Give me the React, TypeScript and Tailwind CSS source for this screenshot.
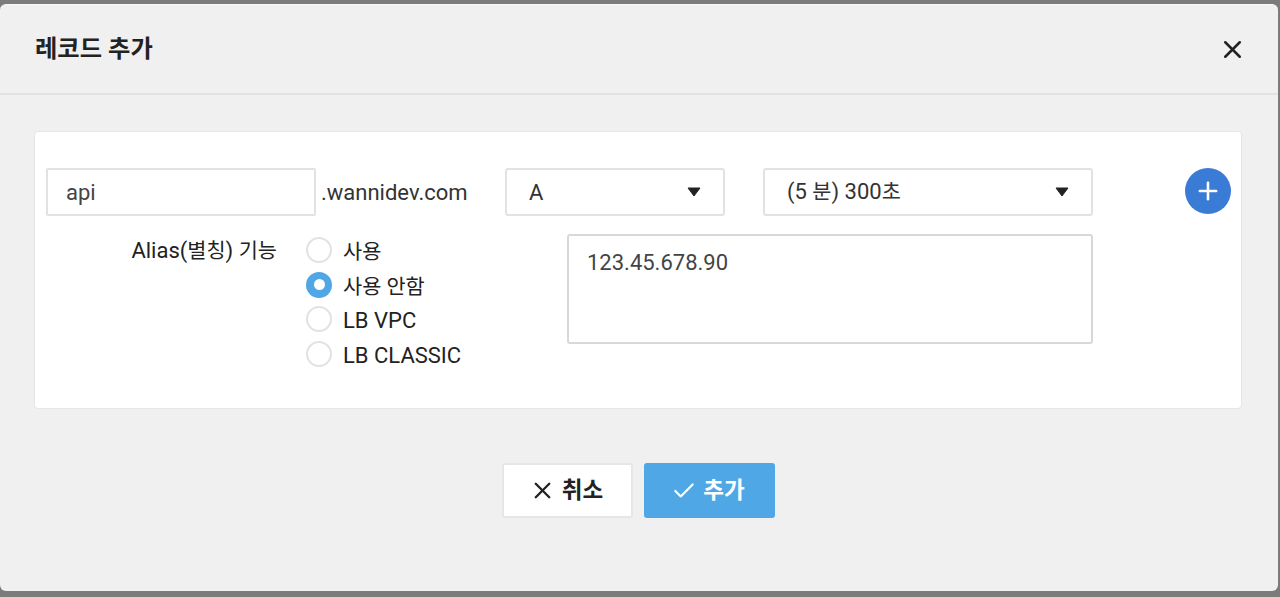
import type { ReactNode } from "react";
import { Check, Plus, X } from "lucide-react";

const FONT = "font-['Roboto','Noto_Sans_CJK_KR',sans-serif]";

// hangul sits a little smaller than the latin text in the source
function Ko({ children }: { children: ReactNode }) {
  return <span className="text-[20.8px]">{children}</span>;
}

const radioOptions = [
  { key: "use", label: <Ko>사용</Ko>, checked: false },
  { key: "none", label: <Ko>사용 안함</Ko>, checked: true },
  { key: "vpc", label: "LB VPC", checked: false },
  { key: "classic", label: "LB CLASSIC", checked: false },
];

function Caret() {
  return (
    <svg width="14" height="10" viewBox="0 0 14 10" className="shrink-0">
      <path d="M1 1 H13 L7 9 Z" fill="#222" stroke="#222" strokeLinejoin="round" />
    </svg>
  );
}

function SelectBox({ value, width }: { value: ReactNode; width: string }) {
  return (
    <div
      className={`${width} h-12 flex items-center justify-between bg-white border-2 border-[#e2e2e2] rounded-[3px] pl-[22px] pr-[22px] text-[22px] text-[#333]`}
    >
      <span>{value}</span>
      <Caret />
    </div>
  );
}

function Radio({ label, checked }: { label: ReactNode; checked: boolean }) {
  return (
    <label className="h-[34.5px] flex items-center gap-[11px] text-[22px] text-[#222]">
      {checked ? (
        <span className="w-[26px] h-[26px] rounded-full bg-[#4fa8e5] flex items-center justify-center">
          <span className="w-[11px] h-[11px] rounded-full bg-white" />
        </span>
      ) : (
        <span className="w-[26px] h-[26px] rounded-full bg-white border-2 border-[#e2e2e2]" />
      )}
      <span className="pt-[3px]">{label}</span>
    </label>
  );
}

export default function App() {
  return (
    <main className={`${FONT} h-[597px] w-[1280px] overflow-hidden bg-[#7b7b7b] pt-1 pr-[2px] pb-[6px]`}>
      <div className="h-full rounded-[6px] bg-[#f0f0f0] border-t border-[#f8f8f8] flex flex-col">
        <header className="h-[90px] shrink-0 flex items-center justify-between border-b-2 border-[#e2e2e2] pl-[35px] pr-[31px]">
          <h1 className="text-[24.3px] font-bold text-[#222]">레코드 추가</h1>
          <X size={29} strokeWidth={2.1} className="text-[#222]" />
        </header>

        <section className="mt-[36px] mx-[34px] mr-[36px] h-[278px] bg-white border border-[#e6e6e6] rounded-[4px] pl-[11px] pt-[36px] pr-[10px]">
          <div className="flex items-start">
            <div className="w-[270px] h-12 flex items-center bg-white border-2 border-[#e2e2e2] rounded-[2px] pl-[18px] text-[22px] text-[#444]">
              api
            </div>
            <span className="ml-[5px] w-[184px] h-12 flex items-center text-[22px] text-[#333]">.wannidev.com</span>
            <SelectBox value="A" width="w-[220px]" />
            <div className="w-[38px] shrink-0" />
            <SelectBox
              value={
                <>
                  (5 <Ko>분</Ko>) 300<Ko>초</Ko>
                </>
              }
              width="w-[330px]"
            />
            <button className="ml-auto w-[46px] h-[46px] rounded-full bg-[#3a7bd5] flex items-center justify-center text-white">
              <Plus size={28} strokeWidth={2.2} />
            </button>
          </div>

          <div className="flex items-start mt-[18px]">
            <div className="w-[231px] h-[34px] flex items-center justify-end text-[22px] text-[#222]">
              <span>
                Alias(<Ko>별칭</Ko>) <Ko>기능</Ko>
              </span>
            </div>
            <div className="ml-[29px] -mt-px w-[261px] flex flex-col">
              {radioOptions.map((o) => (
                <Radio key={o.key} label={o.label} checked={o.checked} />
              ))}
            </div>
            <div className="w-[526px] h-[110px] bg-white border-2 border-[#d8d8d8] rounded-[3px] pl-[18px] pt-[10px] text-[22px] text-[#444]">
              123.45.678.90
            </div>
          </div>
        </section>

        <div className="mt-[54px] flex justify-center gap-[11px] pr-[2px]">
          <button className="w-[131px] h-[55px] bg-white border-2 border-[#e6e6e6] rounded-[3px] flex items-center justify-center gap-[6px] pr-[2px] text-[22.5px] font-bold text-[#222]">
            <X size={27} strokeWidth={2.1} />
            취소
          </button>
          <button className="w-[131px] h-[55px] bg-[#4fa8e5] rounded-[3px] flex items-center justify-center gap-[6px] pr-[2px] text-[22.5px] font-bold text-white">
            <Check size={26} strokeWidth={2} />
            추가
          </button>
        </div>
      </div>
    </main>
  );
}
